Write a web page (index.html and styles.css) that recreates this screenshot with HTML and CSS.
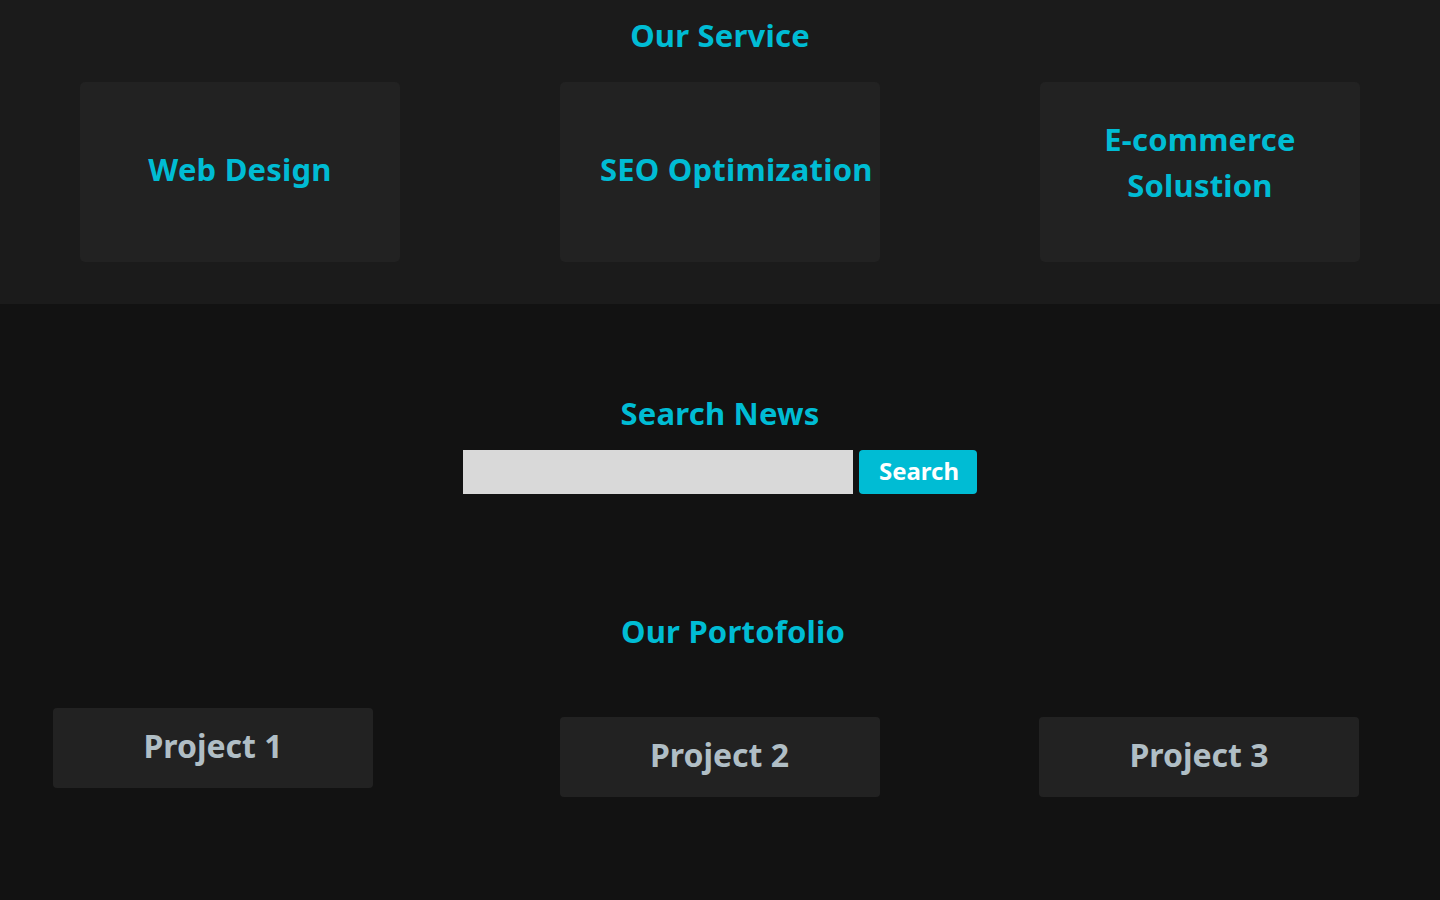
FILE: index.html
```html
<!DOCTYPE html>
<html lang="en">
<head>
<meta charset="utf-8">
<title>Services</title>
<link rel="stylesheet" href="styles.css">
</head>
<body>
<section class="services">
  <h2 class="title">Our Service</h2>
  <div class="service-grid">
    <div class="service-card"><h3>Web Design</h3></div>
    <div class="service-card"><h3 class="nowrap">SEO Optimization</h3></div>
    <div class="service-card service-card-tall"><h3>E-commerce Solustion</h3></div>
  </div>
</section>
<main class="lower">
  <section class="news">
    <h2 class="title">Search News</h2>
    <form class="search-form">
      <input type="text" class="search-input">
      <button type="button" class="search-btn">Search</button>
    </form>
  </section>
  <section class="portfolio">
    <h2 class="title title-shift">Our Portofolio</h2>
    <div class="project-grid">
      <div class="project-card project-first">Project 1</div>
      <div class="project-card">Project 2</div>
      <div class="project-card project-last">Project 3</div>
    </div>
  </section>
</main>
</body>
</html>
```
FILE: styles.css
```css
* { box-sizing: border-box; }
html, body { margin: 0; padding: 0; }
body {
  background: #121212;
  font-family: "Noto Sans", "Open Sans", sans-serif;
  height: 900px;
  overflow: hidden;
}
.title {
  margin: 0;
  font-size: 31px;
  line-height: 46px;
  font-weight: 700;
  color: #00bcd4;
  text-align: center;
  letter-spacing: 0.2px;
}
.services {
  background: #1b1b1b;
  padding: 12px 80px 42px;
}
.services .title { margin-bottom: 24px; }
.service-grid {
  display: flex;
  justify-content: space-between;
}
.service-card {
  width: 320px;
  height: 180px;
  background: #222222;
  border-radius: 5px;
  padding: 0 40px 7px;
  display: flex;
  align-items: center;
  justify-content: center;
}
.service-card-tall { padding-bottom: 20px; }
.service-card h3 {
  margin: 0;
  width: 240px;
  flex: none;
  font-size: 31px;
  line-height: 46px;
  font-weight: 700;
  color: #00bcd4;
  text-align: center;
  letter-spacing: 0.2px;
}
.service-card h3.nowrap { white-space: nowrap; }
.news { padding-top: 86px; }
.news .title { margin-bottom: 14px; }
.search-form {
  display: flex;
  justify-content: center;
  gap: 6px;
  margin: 0;
}
.search-input {
  width: 390px;
  height: 44px;
  border: none;
  background: #d9d9d9;
  padding: 0 10px;
  margin: 0;
  outline: none;
}
.search-btn {
  height: 44px;
  width: 118px;
  border: none;
  border-radius: 4px;
  background: #00bcd4;
  color: #ffffff;
  font-family: inherit;
  font-size: 24px;
  font-weight: 700;
  padding: 0 0 4px 2px;
  margin: 0;
}
.portfolio { padding-top: 114px; }
.title-shift { padding-left: 26px; }
.project-grid {
  margin-top: 63px;
  display: flex;
  justify-content: space-between;
  padding: 0 81px 0 80px;
}
.project-card {
  width: 320px;
  height: 80px;
  background: #222222;
  border-radius: 4px;
  color: #b0bec5;
  font-size: 32px;
  font-weight: 700;
  padding-bottom: 6px;
  display: flex;
  align-items: center;
  justify-content: center;
}
.project-first { transform: translate(-27px, -9px); }
```
